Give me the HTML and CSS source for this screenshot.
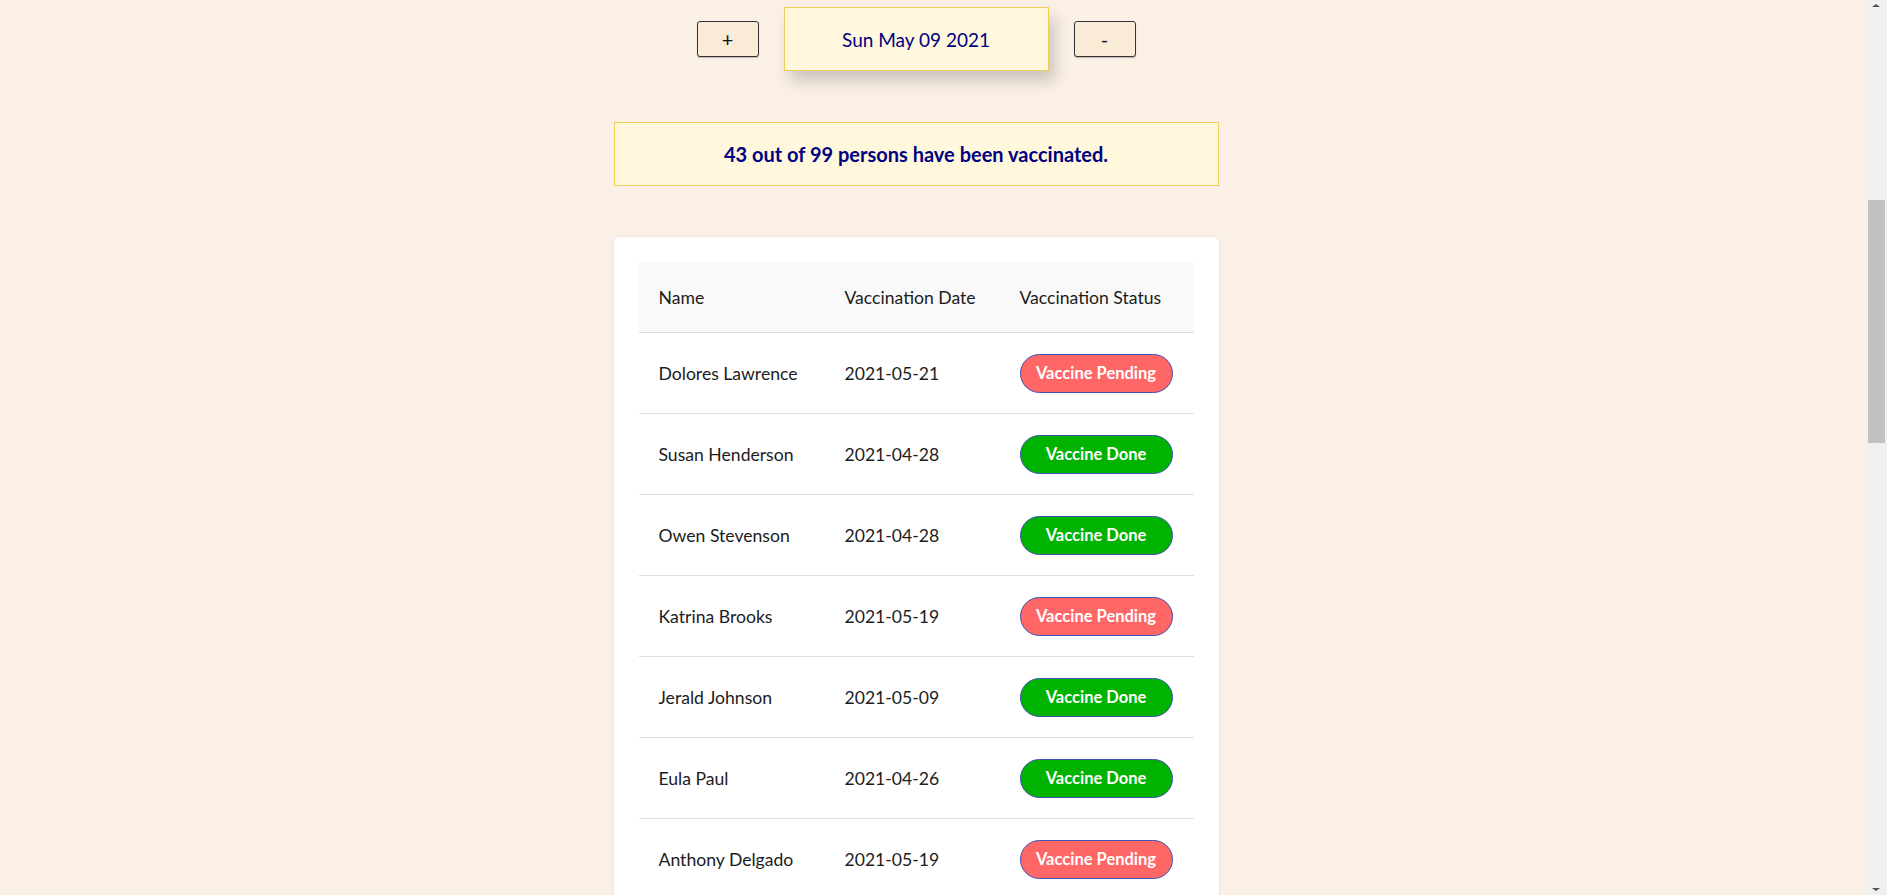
FILE: index.html
```html
<!DOCTYPE html>
<html lang="en">
<head>
<meta charset="utf-8">
<title>Vaccination Tracker</title>
<link rel="stylesheet" href="styles.css">
</head>
<body>
<main class="page">
  <div class="date-bar">
    <button class="step-btn">+</button>
    <div class="date-box">Sun May 09 2021</div>
    <button class="step-btn">-</button>
  </div>
  <div class="summary">43 out of 99 persons have been vaccinated.</div>
  <section class="card">
    <table class="people">
      <thead>
        <tr><th class="c-name">Name</th><th class="c-date">Vaccination Date</th><th class="c-status">Vaccination Status</th></tr>
      </thead>
      <tbody>
        <tr><td>Dolores Lawrence</td><td>2021-05-21</td><td><span class="badge pending">Vaccine Pending</span></td></tr>
        <tr><td>Susan Henderson</td><td>2021-04-28</td><td><span class="badge done">Vaccine Done</span></td></tr>
        <tr><td>Owen Stevenson</td><td>2021-04-28</td><td><span class="badge done">Vaccine Done</span></td></tr>
        <tr><td>Katrina Brooks</td><td>2021-05-19</td><td><span class="badge pending">Vaccine Pending</span></td></tr>
        <tr><td>Jerald Johnson</td><td>2021-05-09</td><td><span class="badge done">Vaccine Done</span></td></tr>
        <tr><td>Eula Paul</td><td>2021-04-26</td><td><span class="badge done">Vaccine Done</span></td></tr>
        <tr><td>Anthony Delgado</td><td>2021-05-19</td><td><span class="badge pending">Vaccine Pending</span></td></tr>
        <tr><td>Lena Carroll</td><td>2021-05-02</td><td><span class="badge done">Vaccine Done</span></td></tr>
        <tr><td>Marcus Reid</td><td>2021-05-14</td><td><span class="badge pending">Vaccine Pending</span></td></tr>
      </tbody>
    </table>
  </section>
</main>
<div class="scrollbar" aria-hidden="true">
  <span class="arrow up"></span>
  <span class="thumb"></span>
  <span class="arrow down"></span>
</div>
</body>
</html>
```
FILE: styles.css
```css
html, body {
  margin: 0;
  padding: 0;
}
body {
  background: #faf0e6;
  font-family: "Lato", "Noto Sans", sans-serif;
  color: #1c1c1c;
}
.page {
  display: flex;
  flex-direction: column;
  align-items: center;
  padding: 7px 55px 60px 0;
}
.date-bar {
  display: flex;
  align-items: center;
  gap: 25px;
}
.step-btn {
  width: 62px;
  height: 36px;
  background: #faebd7;
  border: 1px solid #333;
  border-radius: 3px;
  font-family: "Lato", sans-serif;
  font-size: 20px;
  color: #111;
  padding: 0;
  box-shadow: 0 1px 1px rgba(0,0,0,0.25);
}
.date-box {
  width: 263px;
  height: 62px;
  background: #fff8dc;
  border: 1px solid #f0cc5a;
  display: flex;
  align-items: center;
  justify-content: center;
  color: #000080;
  font-size: 19px;
  box-shadow: 6px 10px 14px rgba(0,0,0,0.18);
}
.summary {
  margin-top: 51px;
  width: 603px;
  height: 62px;
  background: #fff8dc;
  border: 1px solid #f0cc5a;
  display: flex;
  align-items: center;
  justify-content: center;
  color: #000080;
  font-weight: 700;
  font-size: 20px;
}
.card {
  margin-top: 51px;
  width: 555px;
  padding: 25px;
  background: #fff;
  border-radius: 6px;
  box-shadow: 0 0 4px rgba(0,0,0,0.08);
}
.people {
  width: 100%;
  border-collapse: collapse;
  font-size: 17.6px;
}
.people th {
  background: #f9f9f9;
  font-weight: 400;
  text-align: left;
  height: 70px;
  padding: 0 20px;
  border-bottom: 1px solid #dedede;
}
.people td {
  height: 80px;
  padding: 0 20px;
  border-bottom: 1px solid #dedede;
}
.c-name { width: 146px; }
.c-date { width: 135px; }
.badge {
  display: inline-flex;
  align-items: center;
  justify-content: center;
  width: 151px;
  height: 37px;
  border: 1px solid #3f51b5;
  border-radius: 20px;
  color: #fff;
  font-weight: 700;
  font-size: 16.5px;
}
.pending { background: #ff6666; }
.done { background: #00b300; }
.scrollbar {
  position: fixed;
  top: 0;
  right: 0;
  width: 21px;
  height: 100%;
  background: #f0f0f0;
}
.thumb {
  position: absolute;
  left: 2px;
  right: 2px;
  top: 200px;
  height: 243px;
  background: #c1c1c1;
}
.arrow {
  position: absolute;
  left: 6px;
  width: 0;
  height: 0;
  border-left: 4px solid transparent;
  border-right: 4px solid transparent;
}
.arrow.up {
  top: 4px;
  border-bottom: 3px solid #505050;
}
.arrow.down {
  bottom: 4px;
  border-top: 3px solid #505050;
}
```
